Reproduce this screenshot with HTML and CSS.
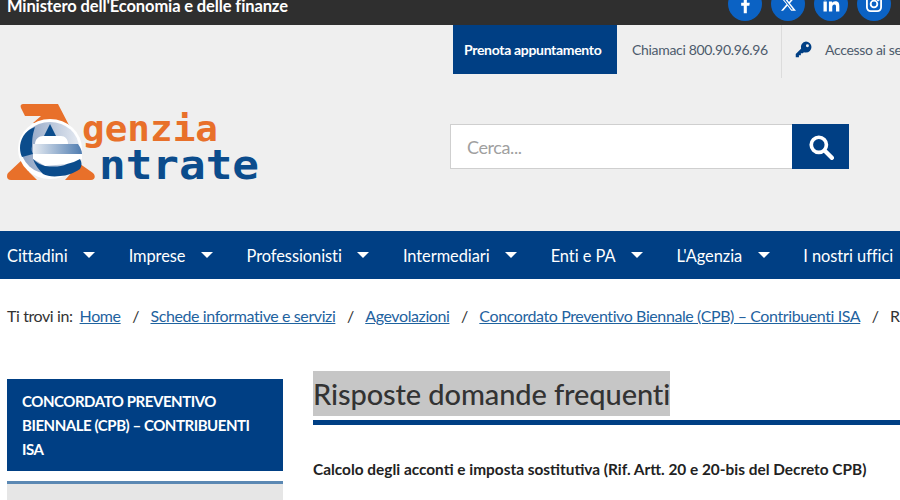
FILE: index.html
```html
<!DOCTYPE html>
<html lang="it">
<head>
  <meta charset="UTF-8" />
  <meta name="viewport" content="width=device-width, initial-scale=1" />
  <title>Risposte domande frequenti</title>
  <link rel="stylesheet" href="styles.css">
</head>
<body>
  <div class="topbar">
    <span class="ministero">Ministero dell'Economia e delle finanze</span>
    <div class="social">
      <a class="social-btn" href="#"><svg viewBox="0 0 24 24" width="20" height="20"><path fill="#fff" d="M14.2 23v-9h3l.5-3.6h-3.5V8.2c0-1 .3-1.8 1.8-1.8h1.9V3.2c-.4 0-1.500-.2-2.800-.2-2.700 0-4.600 1.700-4.600 4.700v2.700H7.400V14h3.100v9z"/></svg></a>
      <a class="social-btn" href="#"><svg viewBox="0 0 24 24" width="16" height="16"><path fill="#fff" fill-rule="evenodd" d="M1 2h7.300l5.200 6.900L19.500 2h3.200l-7.800 8.900L24 22h-7.200l-5.600-7.400L4.700 22H1.500l8.300-9.500zM4.600 3.800l13 16.400h1.900L6.700 3.800z"/></svg></a>
      <a class="social-btn" href="#"><svg viewBox="0 0 24 24" width="20" height="20"><path fill="#fff" d="M3 9h4v12H3zM5 3a2.300 2.300 0 1 1 0 4.600A2.300 2.300 0 0 1 5 3zM9.500 9h3.800v1.700c.6-1 1.900-2 3.900-2 4.100 0 4.800 2.600 4.800 6.100V21h-4v-5.500c0-1.300 0-3-1.800-3s-2.700 1.400-2.700 2.900V21h-4z"/></svg></a>
      <a class="social-btn" href="#"><svg viewBox="0 0 24 24" width="20" height="20" fill="none" stroke="#fff" stroke-width="2.200"><rect x="3.500" y="3.500" width="17" height="17" rx="4.500"/><circle cx="12" cy="12" r="4"/><circle cx="17" cy="7" r=".6"/></svg></a>
    </div>
  </div>

  <div class="tools">
    <a class="prenota" href="#">Prenota appuntamento</a>
    <span class="chiamaci">Chiamaci 800.90.96.96</span>
    <span class="accesso">
      <svg class="key" viewBox="0 0 16 16" width="17" height="17"><path fill="#003f84" d="M10.300 0.500a5.200 5.200 0 0 1 0 10.400c-.7 0-1.300-.1-1.900-.4L7.300 11.600H5.500v1.800H3.700v1.800H.7v-3l5-5a5.200 5.200 0 0 1 4.600-6.700zM11.700 3a1.400 1.400 0 1 0 0 2.800 1.400 1.400 0 0 0 0-2.800z"/></svg>
      Accesso ai servizi
    </span>
  </div>

  <div class="masthead">
    <svg class="logo" viewBox="0 0 253 80" width="253" height="80">
      <defs>
        <linearGradient id="egrad" x1="0" x2="1" y1="0" y2="0">
          <stop offset="0" stop-color="#8aa0c2"/>
          <stop offset="1" stop-color="#e4e9f1"/>
        </linearGradient>
        <linearGradient id="eband" x1="0" x2="1" y1="0" y2="0">
          <stop offset="0" stop-color="#e6ebf2"/>
          <stop offset="1" stop-color="#4f7cb0"/>
        </linearGradient>
      </defs>
      <!-- la A arancione -->
      <path fill="#e8702a" d="M17 1h34l14 27-8 0-13-6-18-2 8-7H18l-4-8c-1-3 0-4 3-4z"/>
      <path fill="#e8702a" d="M16 56L1 70c-2 3-1 7 3 7h26l-8-8zM66 56l20 14c3 3 2 7-2 7H58l8-9z"/>
      <!-- la e -->
      <ellipse cx="43" cy="46" rx="32" ry="30" fill="#fff"/>
      <ellipse cx="43" cy="45" rx="29" ry="26" fill="url(#egrad)"/>
      <path fill="#0b4c8c" d="M28 24C17 28 13 37 13 45c0 4 1 7 2 9l11-3c-1-2-2-4-1-8 0-8 1-13 3-19z"/>
      <path fill="#0b4c8c" d="M43 21l6 12H37z"/>
      <path fill="#fff" d="M28 41c0-5 4-8 8-8h18c4 0 7 3 7 8z"/>
      <path fill="url(#eband)" d="M26 41h45c2 3 4 6 4 10H26z"/>
      <path fill="#fff" d="M26 51h49v5l-15 5-22 2-12-7z"/>
      <path fill="#0b4c8c" d="M26 56c4 4 8 6 12 7 8 1 16 1 22-2 5-1 9-3 13-5 2 3 2 7 0 10-6 4-13 7-20 7-7 1-13 0-17-2-4-4-8-9-10-15z"/>
      <text class="logo-genzia" x="75" y="38" textLength="136" lengthAdjust="spacingAndGlyphs">genzia</text>
      <text class="logo-ntrate" x="92" y="76" textLength="160" lengthAdjust="spacingAndGlyphs">ntrate</text>
    </svg>
    <form class="search">
      <input class="search-input" type="text" placeholder="Cerca..." />
      <button class="search-btn" type="button"><svg viewBox="0 0 24 24" width="26" height="26" fill="none" stroke="#fff"><circle cx="10" cy="10" r="7" stroke-width="3.400"/><path d="M15.500 15.500L22 22" stroke-width="4" stroke-linecap="round"/></svg></button>
    </form>
  </div>

  <nav class="mainnav">
    <a href="#">Cittadini<i class="caret"></i></a>
    <a href="#">Imprese<i class="caret"></i></a>
    <a href="#">Professionisti<i class="caret"></i></a>
    <a href="#">Intermediari<i class="caret"></i></a>
    <a href="#">Enti e PA<i class="caret"></i></a>
    <a href="#">L'Agenzia<i class="caret"></i></a>
    <a href="#">I nostri uffici<i class="caret"></i></a>
  </nav>

  <div class="crumbs">
    <span>Ti trovi in:</span>
    <a href="#">Home</a><span class="sep">/</span>
    <a href="#">Schede informative e servizi</a><span class="sep">/</span>
    <a href="#">Agevolazioni</a><span class="sep">/</span>
    <a href="#">Concordato Preventivo Biennale (CPB) – Contribuenti ISA</a><span class="sep">/</span>
    <span>Risposte domande frequenti</span>
  </div>

  <div class="content">
    <aside class="sidebar">
      <div class="side-title">CONCORDATO PREVENTIVO BIENNALE (CPB) – CONTRIBUENTI ISA</div>
      <div class="side-menu"></div>
    </aside>
    <main class="article">
      <h1><span>Risposte domande frequenti</span></h1>
      <p class="lead">Calcolo degli acconti e imposta sostitutiva (Rif. Artt. 20 e 20-bis del Decreto CPB)</p>
    </main>
  </div>
</body>
</html>
```

FILE: styles.css
```css
html, body {
  margin: 0;
  height: 500px;
  overflow: hidden;
}
body {
  font-family: Lato, "Noto Sans", sans-serif;
  background: #fff;
  color: #2f2f2f;
  width: 900px;
}
a {
  text-decoration: none;
  color: inherit;
}

/* barra ministero */
.topbar {
  height: 25px;
  background: #2f2f2f;
  display: flex;
  justify-content: space-between;
  align-items: flex-end;
  overflow: hidden;
  padding: 0 9px 4px 7px;
  box-sizing: border-box;
}
.ministero {
  color: #fff;
  font-size: 16.5px;
  font-weight: 700;
  letter-spacing: -0.12px;
  line-height: 20px;
  padding-bottom: 5px;
  white-space: nowrap;
}
.social {
  display: flex;
  gap: 9px;
}
.social-btn {
  width: 34px;
  height: 34px;
  flex: none;
  border-radius: 50%;
  background: #0b62c4;
  display: flex;
  align-items: center;
  justify-content: center;
}

/* strumenti */
.tools {
  background: #efefef;
  height: 49px;
  padding-left: 453px;
  display: flex;
  align-items: stretch;
  font-size: 14px;
  letter-spacing: -0.32px;
  color: #4d5b6c;
  white-space: nowrap;
}
.prenota {
  width: 164px;
  flex: none;
  box-sizing: border-box;
  padding-left: 11px;
  background: #003f84;
  color: #fff;
  font-weight: 700;
  display: flex;
  align-items: center;
}
.chiamaci {
  width: 165px;
  flex: none;
  padding-left: 15px;
  box-sizing: border-box;
  border-right: 1px solid #dcdcdc;
  margin-bottom: -4px;
  padding-bottom: 4px;
  display: flex;
  align-items: center;
}
.accesso {
  flex: none;
  padding-left: 13px;
  display: flex;
  align-items: center;
  gap: 13px;
}

/* logo e ricerca */
.masthead {
  background: #efefef;
  height: 157px;
  display: flex;
  align-items: flex-start;
  padding-left: 7px;
}
.logo {
  margin-top: 29px;
  flex: none;
}
.logo-genzia {
  font-family: "DejaVu Sans Mono", monospace;
  font-weight: 700;
  font-size: 35px;
  fill: #e8702a;
}
.logo-ntrate {
  font-family: "DejaVu Sans Mono", monospace;
  font-weight: 700;
  font-size: 40px;
  fill: #0b4c8c;
}
.search {
  display: flex;
  margin: 50px 0 0 190px;
  width: 399px;
  height: 45px;
}
.search-input {
  flex: 1;
  min-width: 0;
  border: 1px solid #cfcfcf;
  border-right: 0;
  background: #fff;
  padding: 0 16px;
  font: 18px Lato, sans-serif;
  letter-spacing: -0.4px;
  outline: none;
}
.search-input::placeholder {
  color: #a0a0a0;
}
.search-btn {
  width: 57px;
  border: none;
  padding: 0;
  background: #003f84;
  display: flex;
  align-items: center;
  justify-content: center;
}

/* menu principale */
.mainnav {
  height: 48px;
  background: #003f84;
  display: flex;
  align-items: center;
  gap: 33.6px;
  padding-left: 7px;
  color: #fff;
  font-size: 16.4px;
  letter-spacing: -0.05px;
  white-space: nowrap;
}
.mainnav a {
  display: flex;
  align-items: center;
  gap: 15.5px;
}
.caret {
  width: 0;
  height: 0;
  border-left: 6px solid transparent;
  border-right: 6px solid transparent;
  border-top: 6px solid #fff;
}

/* briciole */
.crumbs {
  margin-top: 27px;
  padding-left: 7px;
  font-size: 16px;
  letter-spacing: -0.4px;
  line-height: 20px;
  white-space: nowrap;
  display: flex;
  gap: 7px;
  color: #333;
}
.crumbs a {
  color: #1f639f;
  text-decoration: underline;
}
.sep {
  padding: 0 4.5px;
}

/* contenuto */
.content {
  display: flex;
  margin-top: 45px;
  padding-left: 7px;
  gap: 30px;
}
.sidebar {
  width: 276px;
  flex: none;
  padding-top: 8px;
}
.side-title {
  background: #003f84;
  color: #fff;
  font-size: 15px;
  font-weight: 700;
  letter-spacing: -0.45px;
  line-height: 24px;
  padding: 10px 15px;
}
.side-menu {
  margin-top: 10px;
  height: 60px;
  background: #e6e6e6;
  border-top: 3px solid #5b88b3;
}
.article {
  flex: 1;
  min-width: 0;
}
.article h1 {
  margin: 0;
  font-size: 29px;
  font-weight: 500;
  letter-spacing: -0.1px;
  line-height: 45px;
  border-bottom: 5px solid #003f84;
  padding-bottom: 4px;
  white-space: nowrap;
  color: #333;
}
.article h1 span {
  display: inline-block;
  background: #c6c6c6;
  vertical-align: top;
}
.lead {
  margin: 32px 0 0;
  font-size: 15.4px;
  font-weight: 700;
  line-height: 24px;
  color: #222;
  white-space: nowrap;
}
```
